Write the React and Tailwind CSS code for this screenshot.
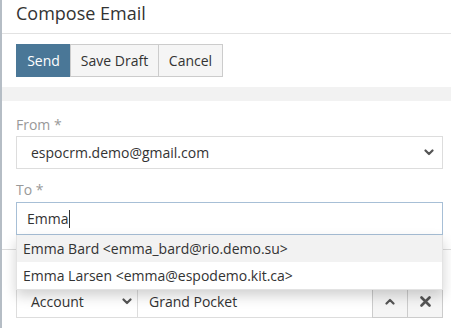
import React from 'react';

// small chevron used inside the select boxes
const Chevron = ({ up = false }) => (
  <svg width="10" height="7" viewBox="0 0 10 7" className="shrink-0">
    <path
      d={up ? 'M1.5 5.5 L5 2 L8.5 5.5' : 'M1.5 1.5 L5 5 L8.5 1.5'}
      fill="none"
      stroke="#555"
      strokeWidth="2.2"
      strokeLinecap="round"
      strokeLinejoin="round"
    />
  </svg>
);

const Cross = () => (
  <svg width="11" height="11" viewBox="0 0 11 11">
    <path d="M1.5 1.5 L9.5 9.5 M9.5 1.5 L1.5 9.5" stroke="#555" strokeWidth="2.6" strokeLinecap="round" />
  </svg>
);

const suggestions = [
  'Emma Bard <emma_bard@rio.demo.su>',
  'Emma Larsen <emma@espodemo.kit.ca>',
];

export default function App() {
  return (
    <div className="flex h-[328px] w-[451px] overflow-hidden bg-white font-['Open_Sans',sans-serif] text-[14px] text-[#333]">
      {/* left edge of the side panel */}
      <div className="w-[2px] shrink-0 bg-[#b5bdc5]" />

      <div className="flex min-w-0 flex-1 flex-col">
        {/* Header */}
        <div className="h-[34px] shrink-0 border-b border-[#e2e2e2] pl-[14px] pt-[1px]">
          <h1 className="text-[18px] leading-[24px] text-[#333]">Compose Email</h1>
        </div>

        {/* Action buttons */}
        <div className="flex py-[10px] pl-[14px]">
          <button className="h-[33px] w-[55px] border border-[#4a7797] bg-[#4a7797] text-[14px] text-white">
            Send
          </button>
          <button className="-ml-px h-[33px] w-[89px] border border-[#ccc] bg-[#f5f5f5] text-[14px] text-[#333]">
            Save Draft
          </button>
          <button className="-ml-px h-[33px] w-[65px] border border-[#ccc] bg-[#f5f5f5] text-[14px] text-[#333]">
            Cancel
          </button>
        </div>

        <div className="h-[14px] shrink-0 bg-[#f2f2f2]" />

        {/* Fields */}
        <div className="pl-[14px] pr-[8px] pt-[14px]">
          <div className="mb-px leading-[20px] text-[#999]">From *</div>
          <div className="flex h-[33px] items-center justify-between border border-[#ddd] bg-white pl-[14px] pr-[8px]">
            <span>espocrm.demo@gmail.com</span>
            <Chevron />
          </div>

          <div className="mb-[2px] mt-[11px] leading-[20px] text-[#999]">To *</div>
          <div className="relative z-10">
            <div className="flex h-[33px] items-center border border-[#a7bfd6] bg-white pl-[10px]">
              <span>Emma</span>
              <span className="ml-px h-[18px] w-px bg-[#333]" />
            </div>

            {/* Autocomplete list */}
            <div className="absolute left-0 right-0 top-full border border-t-0 border-[#e3e3e3] bg-white shadow-[0_6px_12px_rgba(0,0,0,0.18)]">
              {suggestions.map((s, i) => (
                <div
                  key={s}
                  className={`flex h-[27px] items-center pl-[6px] ${i === 0 ? 'bg-[#f2f2f2]' : 'bg-white'}`}
                >
                  {s}
                </div>
              ))}
            </div>
          </div>
        </div>

        <div className="mt-[14px] border-t border-[#dcdcdc]" />

        {/* Parent row (its label sits under the list) */}
        <div className="pl-[14px] pr-[8px] pt-[35px]">
          <div className="flex h-[33px]">
            <div className="flex w-[122px] items-center justify-between border border-[#ddd] bg-white pl-[14px] pr-[5px]">
              <span>Account</span>
              <Chevron />
            </div>
            <div className="-ml-px flex flex-1 items-center border border-[#ddd] bg-white pl-[11px]">
              Grand Pocket
            </div>
            <button className="-ml-px flex w-[36px] items-center justify-center border border-[#ccc] bg-[#f5f5f5]">
              <Chevron up />
            </button>
            <button className="-ml-px flex w-[36px] items-center justify-center border border-[#ccc] bg-[#f5f5f5]">
              <Cross />
            </button>
          </div>
        </div>
      </div>
    </div>
  );
}
